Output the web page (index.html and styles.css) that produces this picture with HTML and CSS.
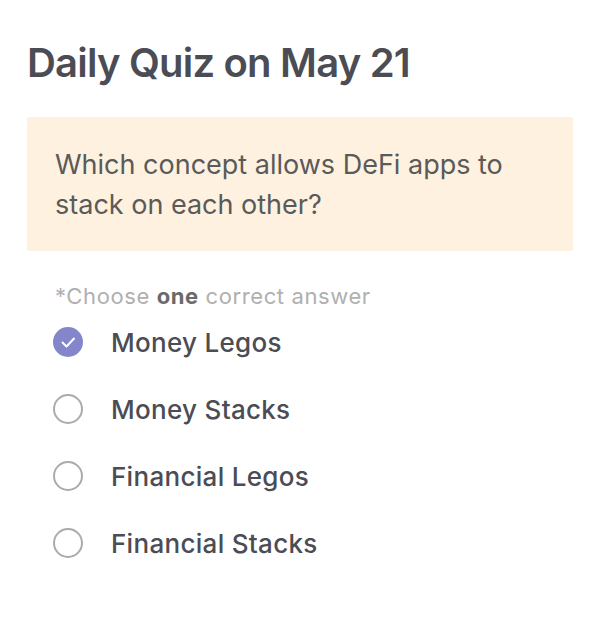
FILE: index.html
```html
<!DOCTYPE html>
<html lang="en">
<head>
    <meta charset="UTF-8">
    <meta name="viewport" content="width=device-width, initial-scale=1.0">
    <title>Daily Quiz</title>
    <link rel="stylesheet" href="styles.css">
</head>
<body>
    <div class="quiz">
        <h1>Daily Quiz on May 21</h1>
        <div class="question">
            Which concept allows DeFi apps to stack on each other?
        </div>
        <p class="hint">*Choose <b>one</b> correct answer</p>
        <div class="options">
            <label class="option">
                <span class="radio checked">
                    <svg viewBox="0 0 30 30" width="30" height="30"><path d="M9.5 15.5l4 4 7.5-8" fill="none" stroke="#fff" stroke-width="2" stroke-linecap="round" stroke-linejoin="round"/></svg>
                </span>
                Money Legos
            </label>
            <label class="option">
                <span class="radio"></span>
                Money Stacks
            </label>
            <label class="option">
                <span class="radio"></span>
                Financial Legos
            </label>
            <label class="option">
                <span class="radio"></span>
                Financial Stacks
            </label>
        </div>
    </div>
</body>
</html>
```

FILE: styles.css
```css
body {
    font-family: Inter, "Open Sans", sans-serif;
    background-color: #ffffff;
    margin: 0;
    padding: 0;
}
.quiz {
    padding: 38px 27px 0;
}
h1 {
    margin: 0;
    font-size: 40px;
    font-weight: 600;
    color: #4b4c54;
    letter-spacing: -0.8px;
}
.question {
    margin-top: 30px;
    background: #fef1df;
    border-radius: 3px;
    padding: 28px 28px 26px;
    font-size: 27px;
    line-height: 40px;
    color: #5a5a5a;
}
.hint {
    margin: 32px 0 0 28px;
    font-size: 22px;
    letter-spacing: 0.6px;
    color: #b0b0b0;
}
.hint b {
    color: #6a6a6a;
    font-weight: 700;
}
.options {
    display: flex;
    flex-direction: column;
    gap: 37px;
    margin: 18px 0 0 26px;
}
.option {
    display: flex;
    align-items: center;
    gap: 28px;
    font-size: 26px;
    font-weight: 500;
    letter-spacing: 0.3px;
    color: #4b4c54;
    height: 30px;
}
.radio {
    box-sizing: border-box;
    width: 30px;
    height: 30px;
    border: 2px solid #ababab;
    border-radius: 50%;
    flex-shrink: 0;
}
.radio.checked {
    border: none;
    background: #8386cb;
}
.radio svg {
    display: block;
}
```
